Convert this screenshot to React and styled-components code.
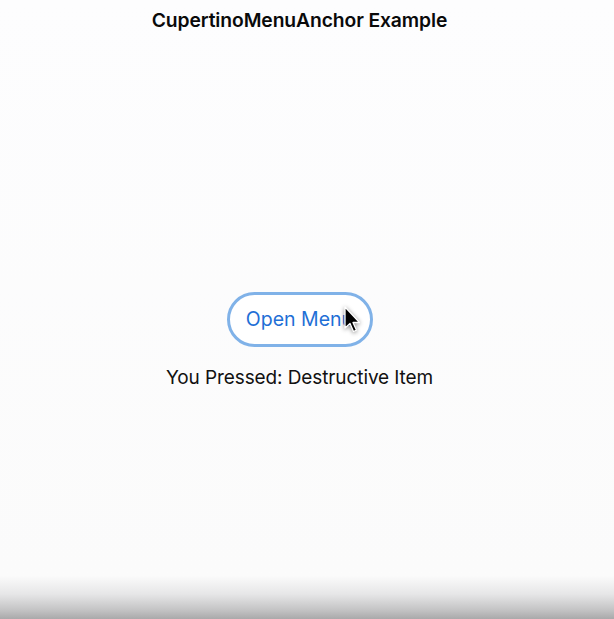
import React from "react";
import styled, { createGlobalStyle } from "styled-components";

const GlobalStyle = createGlobalStyle`
  html, body {
    margin: 0;
    padding: 0;
    height: 100%;
  }
  body {
    font-family: Inter, "Liberation Sans", Arial, sans-serif;
    -webkit-font-smoothing: antialiased;
  }
`;

// whole screen, with the soft dock shade along the bottom edge
const Screen = styled.div`
  display: flex;
  flex-direction: column;
  height: 100vh;
  padding-right: 15px;
  box-sizing: border-box;
  background: linear-gradient(
    to bottom,
    #fdfdfe 0%,
    #fbfbfb 93%,
    #e6e6e7 96%,
    #c4c4c5 98.5%,
    #a9a9aa 100%
  );
`;

const NavBar = styled.header`
  display: flex;
  justify-content: center;
  align-items: center;
  height: 39px;
`;

const NavTitle = styled.h1`
  margin: 0;
  font-size: 19.3px;
  font-weight: 600;
  color: #0a0a0a;
  letter-spacing: -0.1px;
`;

const Body = styled.main`
  flex: 1;
  display: flex;
  flex-direction: column;
  align-items: center;
  padding-top: 253px;
  gap: 19px;
`;

const AnchorWrap = styled.div`
  position: relative;
`;

const MenuButton = styled.button`
  display: flex;
  align-items: center;
  justify-content: center;
  width: 146px;
  height: 55px;
  box-sizing: border-box;
  border: 3.5px solid ${({ $focused }) => ($focused ? "#80b2e8" : "transparent")};
  border-radius: 999px;
  background: #ffffff;
  color: #1f6fd6;
  font-family: inherit;
  font-size: 19.5px;
  font-weight: 400;
  padding: 0 0 1px;
  cursor: pointer;
`;

const Pointer = styled.svg`
  position: absolute;
  left: 116px;
  top: 14px;
  width: 20px;
  height: 28px;
  pointer-events: none;
  filter: drop-shadow(0 1px 2px rgba(0, 0, 0, 0.45));
`;

const Result = styled.p`
  margin: 0;
  font-size: 19px;
  color: #111111;
  letter-spacing: -0.1px;
`;

const App = () => {
  const lastPressed = "Destructive Item";

  return (
    <>
      <GlobalStyle />
      <Screen>
        <NavBar>
          <NavTitle>CupertinoMenuAnchor Example</NavTitle>
        </NavBar>
        <Body>
          <AnchorWrap>
            <MenuButton $focused>Open Menu</MenuButton>
            <Pointer viewBox="0 0 20 28">
              <path
                d="M2 1 L2 22 L7 17.5 L10.5 25.5 L13.5 24.2 L10 16.5 L16.5 16.5 Z"
                fill="#000"
                stroke="#fff"
                strokeWidth="1.3"
                strokeLinejoin="round"
              />
            </Pointer>
          </AnchorWrap>
          <Result>You Pressed: {lastPressed}</Result>
        </Body>
      </Screen>
    </>
  );
};

export default App;
